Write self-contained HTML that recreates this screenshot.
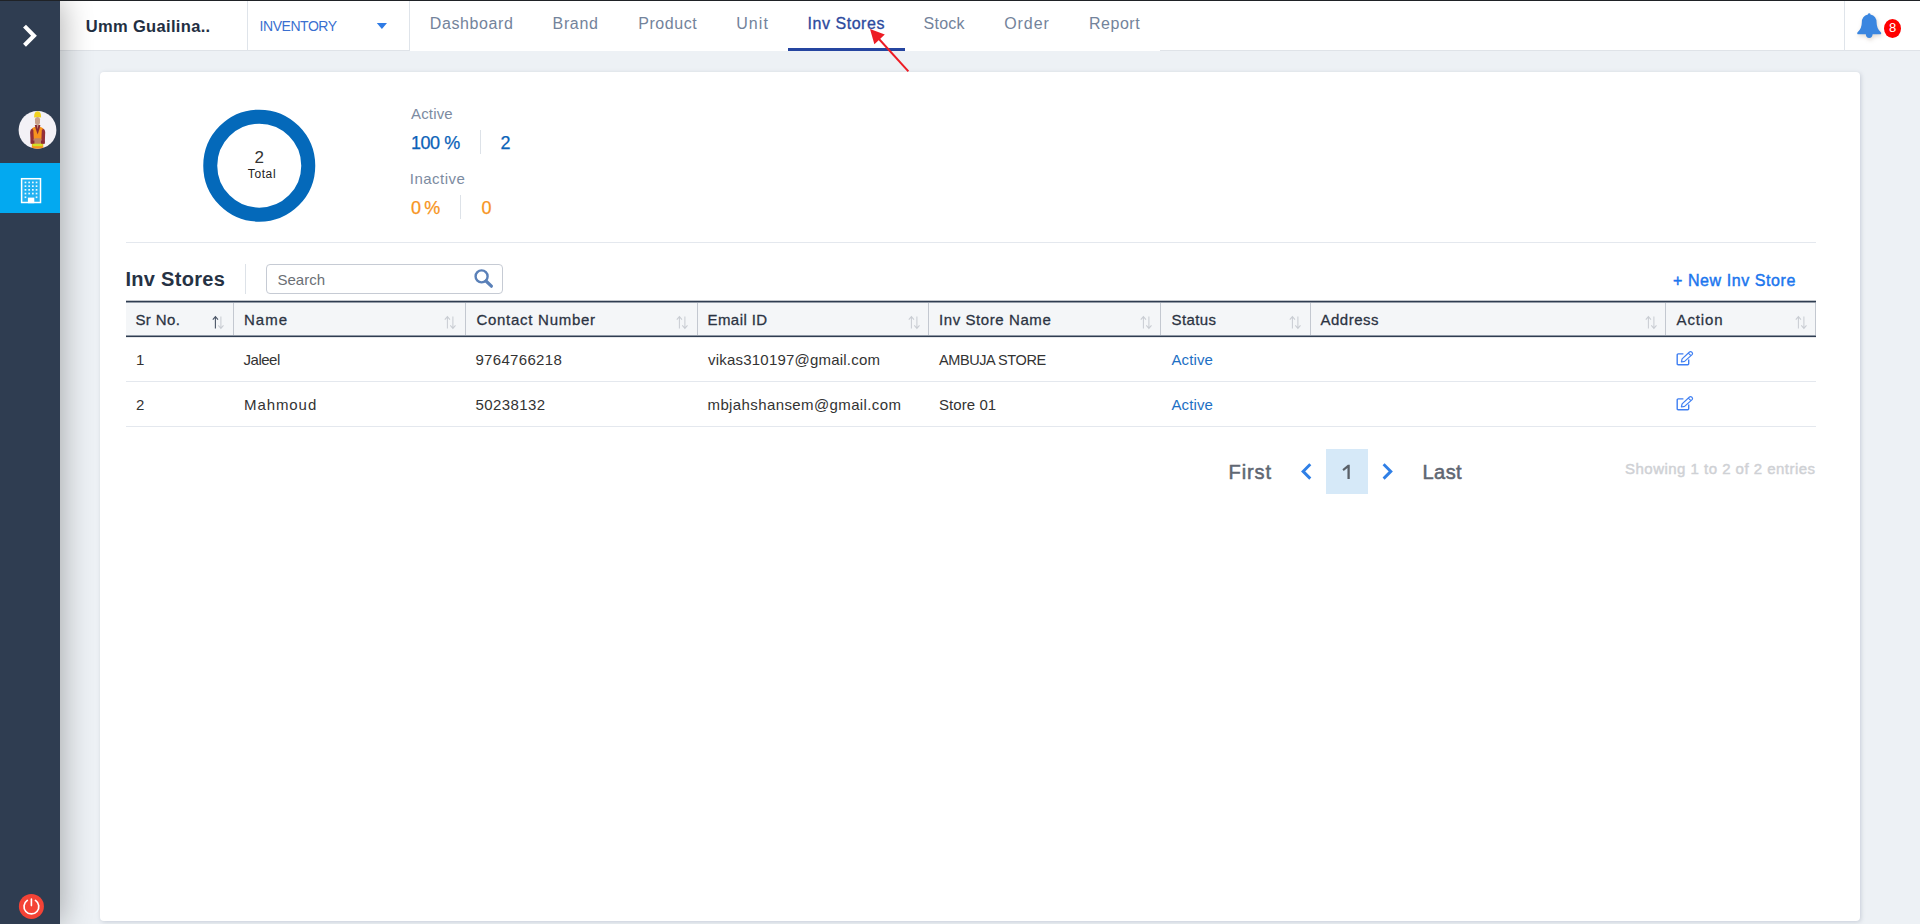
<!DOCTYPE html>
<html lang="en">
<head>
<meta charset="utf-8">
<title>Inv Stores</title>
<style>
*{box-sizing:border-box;margin:0;padding:0}
html,body{width:1920px;height:924px;overflow:hidden}
body{font-family:"Liberation Sans",sans-serif;background:#edf1f5;color:#333;position:relative}
.abs{position:absolute;white-space:nowrap;line-height:1}
/* top dark line */
#topline{position:absolute;left:0;top:0;width:1920px;height:1px;background:#1f2226;z-index:50}
/* sidebar */
#side{position:absolute;left:0;top:0;width:60px;height:924px;background:#2f3d51;z-index:20;box-shadow:3px 0 30px rgba(0,0,0,.30)}
#side .active{position:absolute;left:0;top:163px;width:60px;height:50px;background:#03a9f0}
/* header */
#hdr{position:absolute;left:60px;top:0;width:1860px;height:51px;background:#fff;border-bottom:1px solid #dfe3e8;z-index:10}
#navbg{position:absolute;left:350px;top:0;width:750px;height:51px;background:#fff}
.vsep{position:absolute;top:1px;width:1px;height:50px;background:#dfe4ea}
.tab{position:absolute;font-size:16px;color:#73839b;line-height:1;white-space:nowrap}
.tab.on{color:#2c4a9e;-webkit-text-stroke:0.32px #2c4a9e}
#uline{position:absolute;left:728px;top:48px;width:117px;height:3px;background:#2545a0}
/* card */
#card{position:absolute;left:100px;top:72px;width:1760px;height:849px;background:#fff;border-radius:4px;box-shadow:1px 1px 4px rgba(120,135,155,.33)}
.hr{position:absolute;height:1px;background:#e4e8ee}
/* table */
#thead{position:absolute;left:126px;top:300px;width:1690px;height:38px;background:linear-gradient(to bottom,rgba(47,61,81,.30) 0,rgba(47,61,81,.30) 1px,#2f3d51 1px,#2f3d51 2px,#949ca8 2px,#949ca8 3px,#f4f6f8 3px,#f4f6f8 35px,#8f98a5 35px,#8f98a5 36px,#2f3d51 36px,#2f3d51 37px,rgba(47,61,81,.12) 37px,rgba(47,61,81,.12) 38px)}
.th{position:absolute;font-size:15px;color:#2b3342;-webkit-text-stroke:0.28px #2b3342;line-height:1;white-space:nowrap}
.csep{position:absolute;top:303px;width:1px;height:32px;background:#c3c8d0}
.td{position:absolute;font-size:15px;color:#333;line-height:1;white-space:nowrap}
.lnk{color:#1d6fc4}
</style>
</head>
<body>
<div id="topline"></div>

<!-- SIDEBAR -->
<div id="side">
  <svg class="abs" style="left:20px;top:24px" width="20" height="24" viewBox="0 0 20 24"><path d="M4.5 2.1 L14 11.7 L4.5 21.3" fill="none" stroke="#fff" stroke-width="4.1" stroke-linecap="butt" stroke-linejoin="miter"/></svg>
  <div class="active"></div>
  <!-- avatar -->
  <svg class="abs" style="left:18px;top:110px" width="40" height="40" viewBox="0 0 40 40">
    <defs><clipPath id="avc"><circle cx="19.5" cy="19.9" r="18.9"/></clipPath></defs>
    <circle cx="19.5" cy="19.9" r="18.9" fill="#f3f1f6"/>
    <g clip-path="url(#avc)">
      <path d="M14 18.2 Q16.4 16.4 19.6 16.6 Q22.8 16.4 25.1 18.2 L25.3 40 H13.8 Z" fill="#f7931e"/>
      <path d="M12.1 22 Q12.2 19.4 14.2 18.6 L15.4 20.4 L16 33.6 H12.6 Z" fill="#93303a"/>
      <path d="M27.2 22 Q27.1 19.4 25 18.6 L23.8 20.4 L23.2 33.6 H26.8 Z" fill="#93303a"/>
      <path d="M16.8 15 H22.4 L21.6 18.6 L19.6 24.6 L17.6 18.6 Z" fill="#8a2a34"/>
      <path d="M18.7 14.4 H20.6 L19.6 19 Z" fill="#c79a84"/>
      <rect x="15.4" y="28.2" width="8.2" height="5.6" rx="2" fill="#bd8265"/>
      <path d="M12.8 30.5 H16.4 V33.8 H12.8 Z M23 30.5 H26.6 V33.8 H23 Z" fill="#8c2b36"/>
      <rect x="14.6" y="33.8" width="10" height="2.4" fill="#cfe224"/>
      <rect x="17" y="7" width="5" height="8" rx="2.3" fill="#c9a08a"/>
      <path d="M16.1 7.4 Q16 1.2 19.6 1.2 Q23.2 1.2 23.1 7.4 Q19.6 6.4 16.1 7.4 Z" fill="#f2d21f"/>
    </g>
  </svg>
  <!-- building -->
  <svg class="abs" style="left:20px;top:177px" width="22" height="27" viewBox="0 0 22 27">
    <rect x="1.6" y="1.7" width="18.9" height="23.8" fill="#22b2f2" stroke="#fff" stroke-width="1.5"/>
    <g fill="#e9f7fe">
      <rect x="4.6" y="4.6" width="1.7" height="1.7"/><rect x="8.3" y="4.6" width="1.7" height="1.7"/><rect x="12" y="4.6" width="1.7" height="1.7"/><rect x="15.7" y="4.6" width="1.7" height="1.7"/>
      <rect x="4.6" y="8.3" width="1.7" height="1.7"/><rect x="8.3" y="8.3" width="1.7" height="1.7"/><rect x="12" y="8.3" width="1.7" height="1.7"/><rect x="15.7" y="8.3" width="1.7" height="1.7"/>
      <rect x="4.6" y="12" width="1.7" height="1.7"/><rect x="8.3" y="12" width="1.7" height="1.7"/><rect x="12" y="12" width="1.7" height="1.7"/><rect x="15.7" y="12" width="1.7" height="1.7"/>
      <rect x="4.6" y="15.7" width="1.7" height="1.7"/><rect x="8.3" y="15.7" width="1.7" height="1.7"/><rect x="12" y="15.7" width="1.7" height="1.7"/><rect x="15.7" y="15.7" width="1.7" height="1.7"/>
      <rect x="4.6" y="19.4" width="1.7" height="1.7"/><rect x="15.7" y="19.4" width="1.7" height="1.7"/>
    </g>
    <rect x="7.9" y="20.6" width="6.4" height="5.6" fill="#fff"/>
  </svg>
  <!-- power -->
  <svg class="abs" style="left:18px;top:893px" width="27" height="27" viewBox="0 0 27 27">
    <circle cx="13.4" cy="13.4" r="12.5" fill="#f44336"/>
    <path d="M9.3 7.4 A7.4 7.4 0 1 0 17.5 7.4" fill="none" stroke="#fff" stroke-width="1.7" stroke-linecap="round"/>
    <path d="M13.4 6 V12.6" stroke="#fff" stroke-width="1.6" stroke-linecap="round"/>
  </svg>
</div>

<!-- HEADER -->
<div id="hdr">
  <div id="navbg"></div>
  <div class="vsep" style="left:187px"></div>
  <div class="vsep" style="left:349px"></div>
  <div class="vsep" style="left:1784px"></div>
  <div class="abs" id="brand" style="left:25.8px;top:18px;font-size:16.5px;font-weight:bold;color:#222e42;letter-spacing:0.33px">Umm Guailina..</div>
  <div class="abs" id="inv" style="left:199.6px;top:19px;font-size:14px;color:#3a6fd0;letter-spacing:-0.46px">INVENTORY</div>
  <svg class="abs" style="left:316px;top:22px" width="12" height="8" viewBox="0 0 12 8"><path d="M0.8 1 H11 L5.9 7 Z" fill="#2f7be5"/></svg>
  <div class="tab" id="t1" style="left:369.8px;top:16px;letter-spacing:0.61px">Dashboard</div>
  <div class="tab" id="t2" style="left:492.6px;top:16px;letter-spacing:0.64px">Brand</div>
  <div class="tab" id="t3" style="left:578.2px;top:16px;letter-spacing:0.56px">Product</div>
  <div class="tab" id="t4" style="left:676.2px;top:16px;letter-spacing:1.07px">Unit</div>
  <div class="tab on" id="t5" style="left:747.5px;top:16px;letter-spacing:0.54px">Inv Stores</div>
  <div class="tab" id="t6" style="left:863.6px;top:16px;letter-spacing:0.25px">Stock</div>
  <div class="tab" id="t7" style="left:944.2px;top:16px;letter-spacing:0.95px">Order</div>
  <div class="tab" id="t8" style="left:1029px;top:16px;letter-spacing:0.52px">Report</div>
  <div id="uline"></div>
  <svg class="abs" style="left:1794px;top:10px;overflow:visible;filter:drop-shadow(1px 2px 2px rgba(90,60,30,.20))" width="30" height="32" viewBox="0 0 30 32">
    <path d="M15.2 3.2 Q16.4 3.2 16.5 4.5 Q22.6 6 22.6 12.5 Q22.6 18.6 26.8 22.2 Q27.6 23.2 26.8 24.3 H3.6 Q2.8 23.2 3.6 22.2 Q7.8 18.6 7.8 12.5 Q7.8 6 13.9 4.5 Q14 3.2 15.2 3.2 Z" fill="#3a86e0"/>
    <path d="M11.8 24 H18.6 Q18.4 28 15.2 28 Q12 28 11.8 24 Z" fill="#3a86e0"/>
  </svg>
  <div class="abs" style="left:1824px;top:19px;width:17px;height:19px;border-radius:50%;background:#ff0000"></div>
  <div class="abs" id="bdg" style="left:1829px;top:21px;font-size:13px;color:#fff">8</div>
</div>

<!-- CARD -->
<div id="card"></div>

<!-- donut -->
<svg class="abs" style="left:199px;top:105px" width="120" height="120" viewBox="0 0 120 120"><circle cx="60.25" cy="60.65" r="49" fill="none" stroke="#0469ba" stroke-width="14"/></svg>
<div class="abs" id="dn" style="left:254.6px;top:149px;font-size:17px;color:#333">2</div>
<div class="abs" id="dt" style="left:247.8px;top:168px;font-size:12px;color:#222;letter-spacing:0.60px">Total</div>

<!-- stats -->
<div class="abs" id="s1" style="left:411px;top:106px;font-size:15px;color:#7c8ba1;letter-spacing:0.16px">Active</div>
<div class="abs" id="s2" style="left:411px;top:134px;font-size:18px;color:#0a62b8;-webkit-text-stroke:0.25px #0a62b8;letter-spacing:-0.45px">100 %</div>
<div class="abs" style="left:480px;top:130px;width:1px;height:24px;background:#dde2e8"></div>
<div class="abs" id="s3" style="left:500.6px;top:134px;font-size:18px;color:#0a62b8;-webkit-text-stroke:0.25px #0a62b8">2</div>
<div class="abs" id="s4" style="left:409.8px;top:171px;font-size:15px;color:#7c8ba1;letter-spacing:0.47px">Inactive</div>
<div class="abs" id="s5" style="left:411px;top:199px;font-size:18px;color:#f7941d;-webkit-text-stroke:0.25px #f7941d;letter-spacing:-0.90px">0 %</div>
<div class="abs" style="left:460px;top:195px;width:1px;height:24px;background:#dde2e8"></div>
<div class="abs" id="s6" style="left:481.4px;top:199px;font-size:18px;color:#f7941d;-webkit-text-stroke:0.25px #f7941d">0</div>

<div class="hr" style="left:126px;top:242px;width:1690px"></div>

<!-- toolbar -->
<div class="abs" id="ttl" style="left:125.4px;top:269px;font-size:20px;font-weight:bold;color:#263244;letter-spacing:0.30px">Inv Stores</div>
<div class="abs" style="left:245px;top:264px;width:1px;height:30px;background:#dde2e8"></div>
<div class="abs" style="left:266px;top:264px;width:237px;height:30px;border:1px solid #c6cbd4;border-radius:4px;background:#fff"></div>
<div class="abs" id="srch" style="left:277.4px;top:272px;font-size:15px;color:#6b6f75;letter-spacing:0.04px">Search</div>
<svg class="abs" style="left:473px;top:268px" width="21" height="21" viewBox="0 0 21 21"><circle cx="8.6" cy="8.4" r="6" fill="none" stroke="#5a80b8" stroke-width="2.4"/><path d="M13 13 L18.4 18.2" stroke="#5a80b8" stroke-width="3.2" stroke-linecap="round"/></svg>
<div class="abs" id="newb" style="left:1673px;top:273px;font-size:16px;color:#1b76ee;-webkit-text-stroke:0.45px #1b76ee;letter-spacing:0.58px">+ New Inv Store</div>

<!-- table header -->
<div id="thead"></div>
<div class="csep" style="left:233px"></div>
<div class="csep" style="left:465px"></div>
<div class="csep" style="left:697px"></div>
<div class="csep" style="left:928px"></div>
<div class="csep" style="left:1160px"></div>
<div class="csep" style="left:1310px"></div>
<div class="csep" style="left:1665px"></div>
<div class="csep" style="left:1815px"></div>
<div class="th" id="h1" style="left:135.4px;top:312px;letter-spacing:0.40px">Sr No.</div>
<div class="th" id="h2" style="left:244px;top:312px;letter-spacing:1.00px">Name</div>
<div class="th" id="h3" style="left:476.4px;top:312px;letter-spacing:0.73px">Contact Number</div>
<div class="th" id="h4" style="left:707.5px;top:312px;letter-spacing:0.43px">Email ID</div>
<div class="th" id="h5" style="left:939px;top:312px;letter-spacing:0.58px">Inv Store Name</div>
<div class="th" id="h6" style="left:1171.5px;top:312px;letter-spacing:0.40px">Status</div>
<div class="th" id="h7" style="left:1320.5px;top:312px;letter-spacing:0.50px">Address</div>
<div class="th" id="h8" style="left:1676.6px;top:312px;letter-spacing:0.84px">Action</div>

<!-- sort icons -->
<svg width="0" height="0" style="position:absolute"><defs>
<g id="srt"><path d="M3.4 13.6 V1.8 M0.8 4.6 L3.4 1.6 L6 4.6" fill="none" stroke="#c9cdd3" stroke-width="1.05"/><path d="M8.9 1.4 V13.2 M6.3 10.4 L8.9 13.4 L11.5 10.4" fill="none" stroke="#c9cdd3" stroke-width="1.05"/></g>
<g id="srtu"><path d="M3.4 13.6 V1.8 M0.8 4.6 L3.4 1.6 L6 4.6" fill="none" stroke="#4a5566" stroke-width="1.1"/><path d="M8.9 1.4 V13.2 M6.3 10.4 L8.9 13.4 L11.5 10.4" fill="none" stroke="#c9cdd3" stroke-width="1.05"/></g>
<g id="edt"><path d="M13.7 9.6 V13.7 Q13.7 14.7 12.7 14.7 H3.2 Q2.2 14.7 2.2 13.7 V4.9 Q2.2 3.9 3.2 3.9 H8.4" fill="none" stroke="#3f7ff2" stroke-width="1.4" stroke-linecap="butt"/><path d="M6.4 12 L7.1 8.9 L14.5 2 Q15.6 1.1 16.6 2 L17.2 2.6 Q18 3.6 17.1 4.6 L9.6 11.4 Z M13.4 3.2 L15.9 5.7" fill="none" stroke="#3f7ff2" stroke-width="1.2" stroke-linejoin="round"/></g>
</defs></svg>
<svg class="abs" style="left:211.5px;top:315px" width="13" height="15"><use href="#srtu"/></svg>
<svg class="abs" style="left:443.5px;top:315px" width="13" height="15"><use href="#srt"/></svg>
<svg class="abs" style="left:675.5px;top:315px" width="13" height="15"><use href="#srt"/></svg>
<svg class="abs" style="left:907.5px;top:315px" width="13" height="15"><use href="#srt"/></svg>
<svg class="abs" style="left:1139.5px;top:315px" width="13" height="15"><use href="#srt"/></svg>
<svg class="abs" style="left:1288.5px;top:315px" width="13" height="15"><use href="#srt"/></svg>
<svg class="abs" style="left:1644.5px;top:315px" width="13" height="15"><use href="#srt"/></svg>
<svg class="abs" style="left:1794.5px;top:315px" width="13" height="15"><use href="#srt"/></svg>

<!-- rows -->
<div class="td" id="r1a" style="left:136px;top:352px">1</div>
<div class="td" id="r1b" style="left:243.6px;top:352px;letter-spacing:-0.50px">Jaleel</div>
<div class="td" id="r1c" style="left:475.4px;top:352px;letter-spacing:0.33px">9764766218</div>
<div class="td" id="r1d" style="left:708px;top:352px;letter-spacing:0.21px">vikas310197@gmail.com</div>
<div class="td" id="r1e" style="font-size:14.5px;left:939px;top:353px;letter-spacing:-0.42px">AMBUJA STORE</div>
<div class="td lnk" id="r1f" style="left:1171.5px;top:352px;letter-spacing:0.10px">Active</div>
<svg class="abs" style="left:1675px;top:350px" width="19" height="17"><use href="#edt"/></svg>
<div class="hr" style="left:126px;top:381px;width:1690px"></div>
<div class="td" id="r2a" style="left:136px;top:397px">2</div>
<div class="td" id="r2b" style="left:244px;top:397px;letter-spacing:0.92px">Mahmoud</div>
<div class="td" id="r2c" style="left:475.4px;top:397px;letter-spacing:0.43px">50238132</div>
<div class="td" id="r2d" style="left:707.5px;top:397px;letter-spacing:0.39px">mbjahshansem@gmail.com</div>
<div class="td" id="r2e" style="left:939px;top:397px;letter-spacing:0.06px">Store 01</div>
<div class="td lnk" id="r2f" style="left:1171.5px;top:397px;letter-spacing:0.10px">Active</div>
<svg class="abs" style="left:1675px;top:395px" width="19" height="17"><use href="#edt"/></svg>
<div class="hr" style="left:126px;top:426px;width:1690px"></div>

<!-- pagination -->
<div class="abs" id="p1" style="left:1228.6px;top:462px;font-size:20px;color:#5f6773;-webkit-text-stroke:0.55px #5f6773;letter-spacing:0.88px">First</div>
<svg class="abs" style="left:1299px;top:462px" width="15" height="20" viewBox="0 0 15 20"><path d="M11.3 2.2 L4.1 9.4 L11.3 16.6" fill="none" stroke="#2f7fe6" stroke-width="2.9" stroke-linecap="butt" stroke-linejoin="miter"/></svg>
<div class="abs" style="left:1326px;top:449px;width:42px;height:45px;background:#d6e9f8"></div>
<svg class="abs" style="left:1340px;top:462px" width="12" height="18" viewBox="0 0 12 18"><path d="M9.75 2.8 V16.9 H7.45 V5.9 L3.7 8.9 L2.4 7.3 L7.85 2.8 Z" fill="#5a6068"/></svg>
<svg class="abs" style="left:1380px;top:462px" width="15" height="20" viewBox="0 0 15 20"><path d="M3.6 2.2 L10.8 9.4 L3.6 16.6" fill="none" stroke="#2f7fe6" stroke-width="2.9" stroke-linecap="butt" stroke-linejoin="miter"/></svg>
<div class="abs" id="p3" style="left:1422.6px;top:462px;font-size:20px;color:#5f6773;-webkit-text-stroke:0.55px #5f6773;letter-spacing:0.40px">Last</div>
<div class="abs" id="shw" style="left:1625px;top:461px;font-size:15px;color:#cfd1d5;-webkit-text-stroke:0.45px #cfd1d5;letter-spacing:0.48px">Showing 1 to 2 of 2 entries</div>

<!-- red arrow annotation -->
<svg class="abs" style="left:860px;top:20px;z-index:60" width="60" height="60" viewBox="0 0 60 60">
  <path d="M48.4 51.4 L19 19" stroke="#ed1c24" stroke-width="2" stroke-linecap="butt"/>
  <path d="M10 9 L24.8 14.6 L14.4 24.2 Z" fill="#ed1c24"/>
</svg>

</body>
</html>
